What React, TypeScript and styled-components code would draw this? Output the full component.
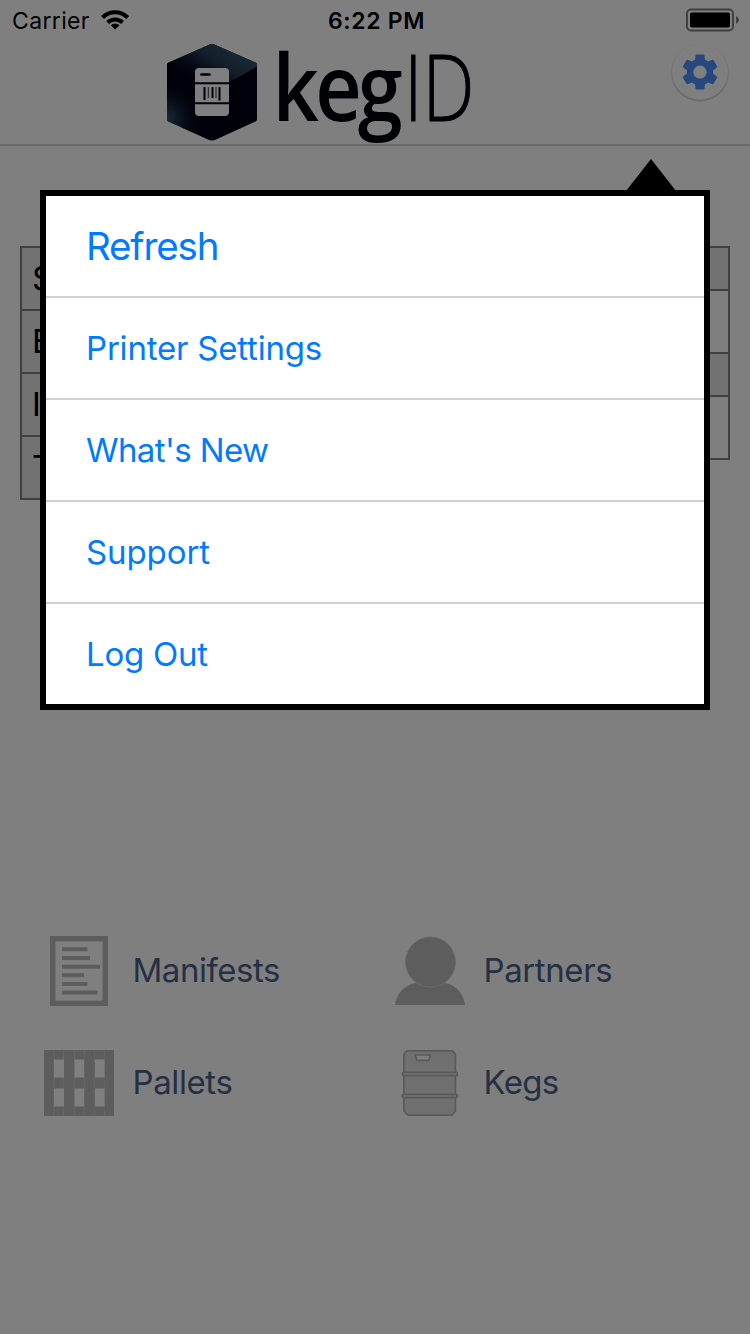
import React from "react";
import styled, { createGlobalStyle } from "styled-components";
import { MdSettings } from "react-icons/md";

const GlobalStyle = createGlobalStyle`
  body { margin: 0; background: #fff; font-family: Inter, "Liberation Sans", sans-serif; }
  * { box-sizing: border-box; }
`;

const Screen = styled.div`
  position: relative;
  width: 750px;
  height: 1334px;
  overflow: hidden;
  background: #fff;
  display: flex;
  flex-direction: column;
`;

const StatusBar = styled.div`
  height: 40px;
  display: grid;
  grid-template-columns: 1fr auto 1fr;
  align-items: center;
  padding: 1px 11px 0 12px;
  color: #000;
  font-size: 23px;
`;
const Carrier = styled.div`
  display: flex;
  align-items: center;
  gap: 11px;
  letter-spacing: 0.35px;
`;
const Clock = styled.div`
  font-weight: 600;
  font-size: 23px;
  letter-spacing: 0.65px;
  padding-left: 2px;
`;
const BatterySlot = styled.div`
  display: flex;
  justify-content: flex-end;
  padding-bottom: 1px;
`;

const Header = styled.header`
  height: 106px;
  border-bottom: 2px solid #d2d0dc;
  display: flex;
  justify-content: space-between;
  align-items: flex-start;
  padding: 2px 22px 0 165px;
`;
const SettingsButton = styled.button`
  width: 56px;
  height: 56px;
  margin-top: 2px;
  padding: 0;
  border: 0;
  border-radius: 50%;
  background: #fff;
  color: #4c90ff;
  display: flex;
  align-items: center;
  justify-content: center;
  box-shadow: 0 1px 2px rgba(0, 0, 0, 0.3);
`;

const Tables = styled.div`
  display: flex;
  justify-content: space-between;
  align-items: flex-start;
  height: 690px;
  padding: 100px 20px 0;
`;
const Table = styled.div`
  width: 340px;
  border: 2px solid #808080;
  border-bottom: 0;
`;
const Cell = styled.div<{ $height: number; $shaded?: boolean }>`
  height: ${(p) => p.$height}px;
  border-bottom: 2px solid #808080;
  background: ${(p) => (p.$shaded ? "#e4e4e4" : "#fff")};
  display: flex;
  align-items: center;
  padding: 0 0 2px 10px;
  font-size: 33px;
  color: #000;
`;

const Shortcuts = styled.nav`
  display: grid;
  grid-template-columns: 351px 1fr;
  grid-auto-rows: 112px;
  padding: 79px 0 0 44px;
`;
const Shortcut = styled.a`
  display: flex;
  align-items: center;
  gap: 18.5px;
  color: #4a608a;
  font-size: 33px;
  height: 112px;
`;
const ShortcutLabel = styled.span<{ $spacing: number }>`
  padding-bottom: 2px;
  letter-spacing: ${(p) => p.$spacing}px;
`;

const Overlay = styled.div`
  position: absolute;
  inset: 0;
  background: rgba(0, 0, 0, 0.5);
  padding: 190px 40px 0;
`;
const Popover = styled.div`
  position: relative;
  border: 6px solid #000;
  background: #fff;
`;
const Arrow = styled.div`
  position: absolute;
  right: 28px;
  top: -37px;
  border: solid transparent;
  border-width: 0 25px 32px;
  border-bottom-color: #000;
`;
const MenuItem = styled.div<{ $large?: boolean; $spacing: number }>`
  height: 102px;
  border-bottom: 2px solid #d0d0d0;
  padding-left: 40px;
  display: flex;
  align-items: center;
  color: #007aff;
  font-size: ${(p) => (p.$large ? 38.5 : 33)}px;
  letter-spacing: ${(p) => p.$spacing}px;
`;
const LastMenuItem = styled(MenuItem)`
  height: 100px;
  border-bottom: 0;
`;

const WifiIcon = () => (
  <svg width="28" height="21" viewBox="100.9 10.5 28 21" fill="none" stroke="#000">
    <path d="M102.4 18 A17.6 17.6 0 0 1 127.6 18" strokeWidth="4" />
    <path d="M107.5 23 A10.6 10.6 0 0 1 122.5 23" strokeWidth="4" />
    <path d="M115 30 L110.6 25.8 A6.4 6.4 0 0 1 119.4 25.8 Z" fill="#000" stroke="none" />
  </svg>
);

const BatteryIcon = () => (
  <svg width="53" height="24" viewBox="686 8.5 53 24">
    <rect x="687" y="10" width="46" height="21" rx="4" fill="none" stroke="#808080" strokeWidth="2" />
    <rect x="690" y="13" width="40" height="15" rx="1.8" fill="#000" />
    <path d="M736 16.5 Q739 18 739 20.5 Q739 23 736 24.5 Z" fill="#808080" />
  </svg>
);

const LogoSvg = styled.svg`
  overflow: visible;
`;

const Logo = () => (
  <LogoSvg width="312" height="104" viewBox="165 42 312 104">
    <defs>
      <radialGradient id="glow" cx="167" cy="118" r="38" gradientUnits="userSpaceOnUse">
        <stop offset="0" stopColor="#36546c" />
        <stop offset="0.5" stopColor="#101e34" stopOpacity="0.8" />
        <stop offset="1" stopColor="#000014" stopOpacity="0" />
      </radialGradient>
      <linearGradient id="shade" x1="228" y1="46" x2="204" y2="86" gradientUnits="userSpaceOnUse">
        <stop offset="0" stopColor="#34506a" />
        <stop offset="0.4" stopColor="#263d54" />
        <stop offset="0.75" stopColor="#0a1226" />
        <stop offset="1" stopColor="#000014" />
      </linearGradient>
      <clipPath id="hex">
        <path d="M208.5 45 Q212 43 215.5 45 L255.5 62.5 Q257 63.3 257 65 V119 Q257 120.7 255.5 121.5 L216 139.5 Q212 141.3 208 139.5 L168.5 121.5 Q167 120.7 167 119 V65 Q167 63.3 168.5 62.5 Z" />
      </clipPath>
    </defs>
    <g clipPath="url(#hex)">
      <rect x="166" y="43" width="92" height="99" fill="#000014" />
      <path d="M166 64 L212 43 L258 63 V66 L212 92 L166 92 Z" fill="url(#shade)" />
      <rect x="166" y="43" width="92" height="99" fill="url(#glow)" />
    </g>
    <rect x="195" y="68" width="34" height="48" rx="4" fill="#fff" />
    <path d="M195 83.3 H229 M195 103.3 H229" stroke="#000014" strokeWidth="2" />
    <path d="M201.5 74.5 H209.5" stroke="#000014" strokeWidth="2.6" strokeLinecap="round" />
    <path d="M204.5 87 V100 M212.5 87 V98 M219.5 87 V100.5" stroke="#000014" strokeWidth="2" />
    <path d="M208.3 87 V98 M216 87 V98" stroke="#333344" strokeWidth="1" />
    <g fill="#00000f" fontFamily="'Open Sans', sans-serif" fontSize="92">
      <text transform="translate(272.5 120.5) scale(0.88 1.01)" x="0 48.5 97" y="0" fontWeight="600">keg</text>
      <text x="404" y="121" fontWeight="300" textLength="70.5" lengthAdjust="spacingAndGlyphs" stroke="#00000f" strokeWidth="1">ID</text>
    </g>
  </LogoSvg>
);

const ManifestIcon = () => (
  <svg width="70" height="70" viewBox="44 936 70 70">
    <rect x="52.7" y="938.7" width="52.6" height="64.6" fill="#fff" stroke="#bababa" strokeWidth="5.4" />
    <path d="M62 949.3 H87.5 M62 958 H90 M62 966.7 H100 M62 975.2 H84 M62 984 H87.5 M62 992.5 H97.5" stroke="#bababa" strokeWidth="4" />
  </svg>
);

const PalletIcon = () => (
  <svg width="70" height="66" viewBox="0 0 70 66">
    <path d="M0 0H70V66H0Z" fill="#bababa" />
    <path d="M10 0V66M19.5 0V66M30.5 0V66M40.5 0V66M50.5 0V66M60.5 0V66" stroke="#c8c8c8" strokeWidth="1.5" />
    <path d="M10 9.5h10v18H10z M30.5 9.5h9.5v18h-9.5z M51 9.5h9.5v18H51z M10 38.5h10v18H10z M30.5 38.5h9.5v18h-9.5z M51 38.5h9.5v18H51z" fill="#fff" />
  </svg>
);

const PartnerIcon = () => (
  <svg width="70" height="70" viewBox="395 936 70 70">
    <path d="M395 1005 C397 991 408 982.5 420 982.5 H440 C453 982.5 463 991 465 1005 Z" fill="#bababa" />
    <circle cx="430.5" cy="962" r="25" fill="#bababa" stroke="#d4d4d4" strokeWidth="1" />
  </svg>
);

const KegIcon = () => (
  <svg width="70" height="66" viewBox="394.6 1050 70 66" stroke="#b4b4b4" strokeWidth="1.7" fill="#e0e0e0">
    <path d="M406.5 1050.8 H452 L455 1054 V1111 L451.5 1115.2 H407.5 L403.5 1111 V1054 Z" strokeLinejoin="round" />
    <path d="M415 1055 H430 L428.5 1060.3 H416.5 Z" fill="#fff" />
    <rect x="402" y="1072.3" width="55" height="3.3" rx="1" />
    <rect x="402" y="1094.3" width="55" height="3.3" rx="1" />
  </svg>
);

const stockRows = ["S", "E", "I", "T"];

export default function App() {
  return (
    <Screen>
      <GlobalStyle />
      <StatusBar>
        <Carrier>
          Carrier
          <WifiIcon />
        </Carrier>
        <Clock>6:22 PM</Clock>
        <BatterySlot>
          <BatteryIcon />
        </BatterySlot>
      </StatusBar>
      <Header>
        <Logo />
        <SettingsButton aria-label="Settings">
          <MdSettings size={44} />
        </SettingsButton>
      </Header>
      <Tables>
        <Table>
          {stockRows.map((label) => (
            <Cell key={label} $height={63} $shaded>
              {label}
            </Cell>
          ))}
        </Table>
        <Table>
          <Cell $height={43} $shaded />
          <Cell $height={63} />
          <Cell $height={43} $shaded />
          <Cell $height={63} />
        </Table>
      </Tables>
      <Shortcuts>
        <Shortcut>
          <ManifestIcon />
          <ShortcutLabel $spacing={-0.45}>Manifests</ShortcutLabel>
        </Shortcut>
        <Shortcut>
          <PartnerIcon />
          <ShortcutLabel $spacing={-0.4}>Partners</ShortcutLabel>
        </Shortcut>
        <Shortcut>
          <PalletIcon />
          <ShortcutLabel $spacing={-0.4}>Pallets</ShortcutLabel>
        </Shortcut>
        <Shortcut>
          <KegIcon />
          <ShortcutLabel $spacing={-0.7}>Kegs</ShortcutLabel>
        </Shortcut>
      </Shortcuts>
      <Overlay>
        <Popover>
          <MenuItem $large $spacing={-1.15}>Refresh</MenuItem>
          <MenuItem $spacing={-0.2}>Printer Settings</MenuItem>
          <MenuItem $spacing={-0.6}>What's New</MenuItem>
          <MenuItem $spacing={-0.1}>Support</MenuItem>
          <LastMenuItem $spacing={-0.25}>Log Out</LastMenuItem>
          <Arrow />
        </Popover>
      </Overlay>
    </Screen>
  );
}
